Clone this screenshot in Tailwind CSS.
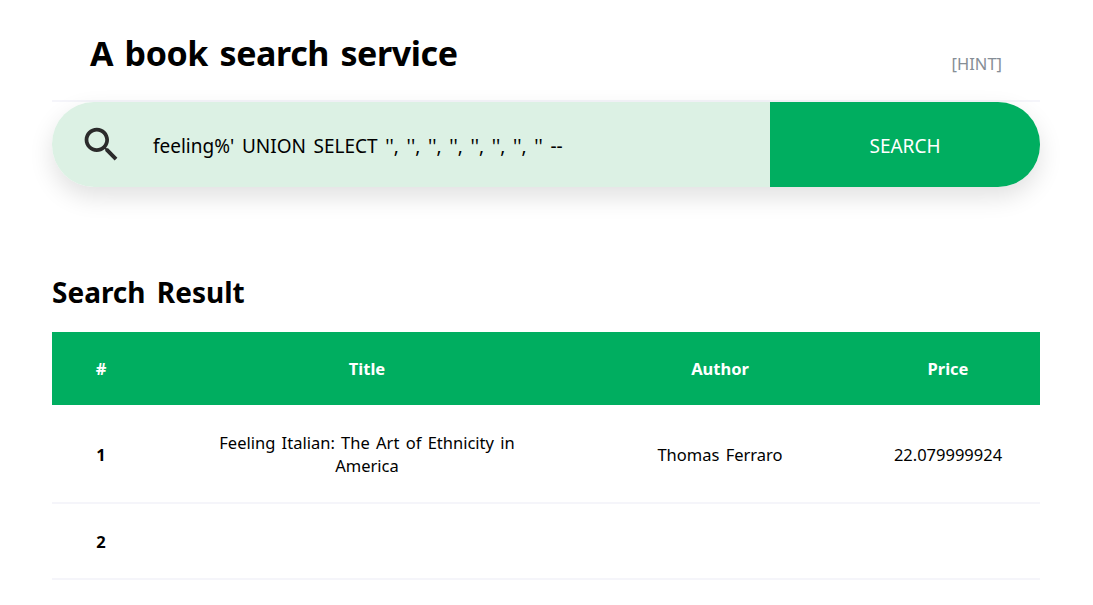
<!DOCTYPE html>
<html lang="en">
<head>
  <meta charset="UTF-8">
  <title>A book search service</title>
  <script src="https://cdn.jsdelivr.net/npm/@tailwindcss/browser@4"></script>
</head>
<body class="bg-white text-black overflow-hidden font-['Noto_Sans',sans-serif]">
  <div class="w-[988px] ml-[52px]">
    <!-- Header -->
    <div class="h-[102px] px-[38px] flex justify-between border-b-2 border-[#f5f5fa]">
      <h1 class="text-[34px] font-bold leading-[48px] pt-[29px] tracking-[-0.4px] [word-spacing:3px]">A book search service</h1>
      <a class="text-[#868e96] text-[16.5px] leading-[24px] pt-[52px]">[HINT]</a>
    </div>

    <!-- Search -->
    <div class="h-[85px] flex rounded-[42px] overflow-hidden shadow-[0_10px_25px_rgba(0,0,0,0.12)]">
      <div class="w-[718px] bg-[#dcf1e4] flex items-center">
        <svg class="ml-[27px] w-[45px] h-[45px]" viewBox="0 0 24 24" fill="#2b2b2b">
          <path d="M15.5 14h-.79l-.28-.27C15.41 12.59 16 11.11 16 9.5 16 5.91 13.09 3 9.5 3S3 5.91 3 9.5 5.91 16 9.5 16c1.61 0 3.09-.59 4.23-1.57l.27.28v.79l5 4.99L20.49 19l-4.99-5zm-6 0C7.01 14 5 11.99 5 9.5S7.01 5 9.5 5 14 7.01 14 9.5 11.99 14 9.5 14z"/>
        </svg>
        <span class="ml-[29px] pt-[4px] text-[19px] [word-spacing:2.7px]">feeling%' UNION SELECT '', '', '', '', '', '', '', '' --</span>
      </div>
      <button class="w-[270px] pt-[4px] bg-[#00ae60] text-white text-[19px]">SEARCH</button>
    </div>

    <!-- Result -->
    <h2 class="text-[28px] font-bold leading-[38px] mt-[86px] [word-spacing:4px]">Search Result</h2>
    <table class="w-full mt-[21px] table-fixed border-collapse">
      <thead class="bg-[#00ae60] text-white">
        <tr class="h-[73px] text-[16.5px] font-bold">
          <th class="w-[98px] pt-[2px]">#</th>
          <th class="w-[434px] pt-[2px]">Title</th>
          <th class="w-[272px] pt-[2px]">Author</th>
          <th class="pt-[2px]">Price</th>
        </tr>
      </thead>
      <tbody class="text-[16.5px] text-center">
        <tr class="h-[98px] border-b-2 border-[#f5f5fa]">
          <td class="pt-[4px] font-bold">1</td>
          <td class="px-[60px] leading-[23px] [word-spacing:2px]">Feeling Italian: The Art of Ethnicity in America</td>
          <td class="pt-[4px] [word-spacing:2px]">Thomas Ferraro</td>
          <td class="pt-[4px]">22.079999924</td>
        </tr>
        <tr class="h-[76px] border-b-2 border-[#f5f5fa]">
          <td class="pt-[2px] font-bold">2</td>
          <td></td>
          <td></td>
          <td></td>
        </tr>
      </tbody>
    </table>
  </div>
</body>
</html>
